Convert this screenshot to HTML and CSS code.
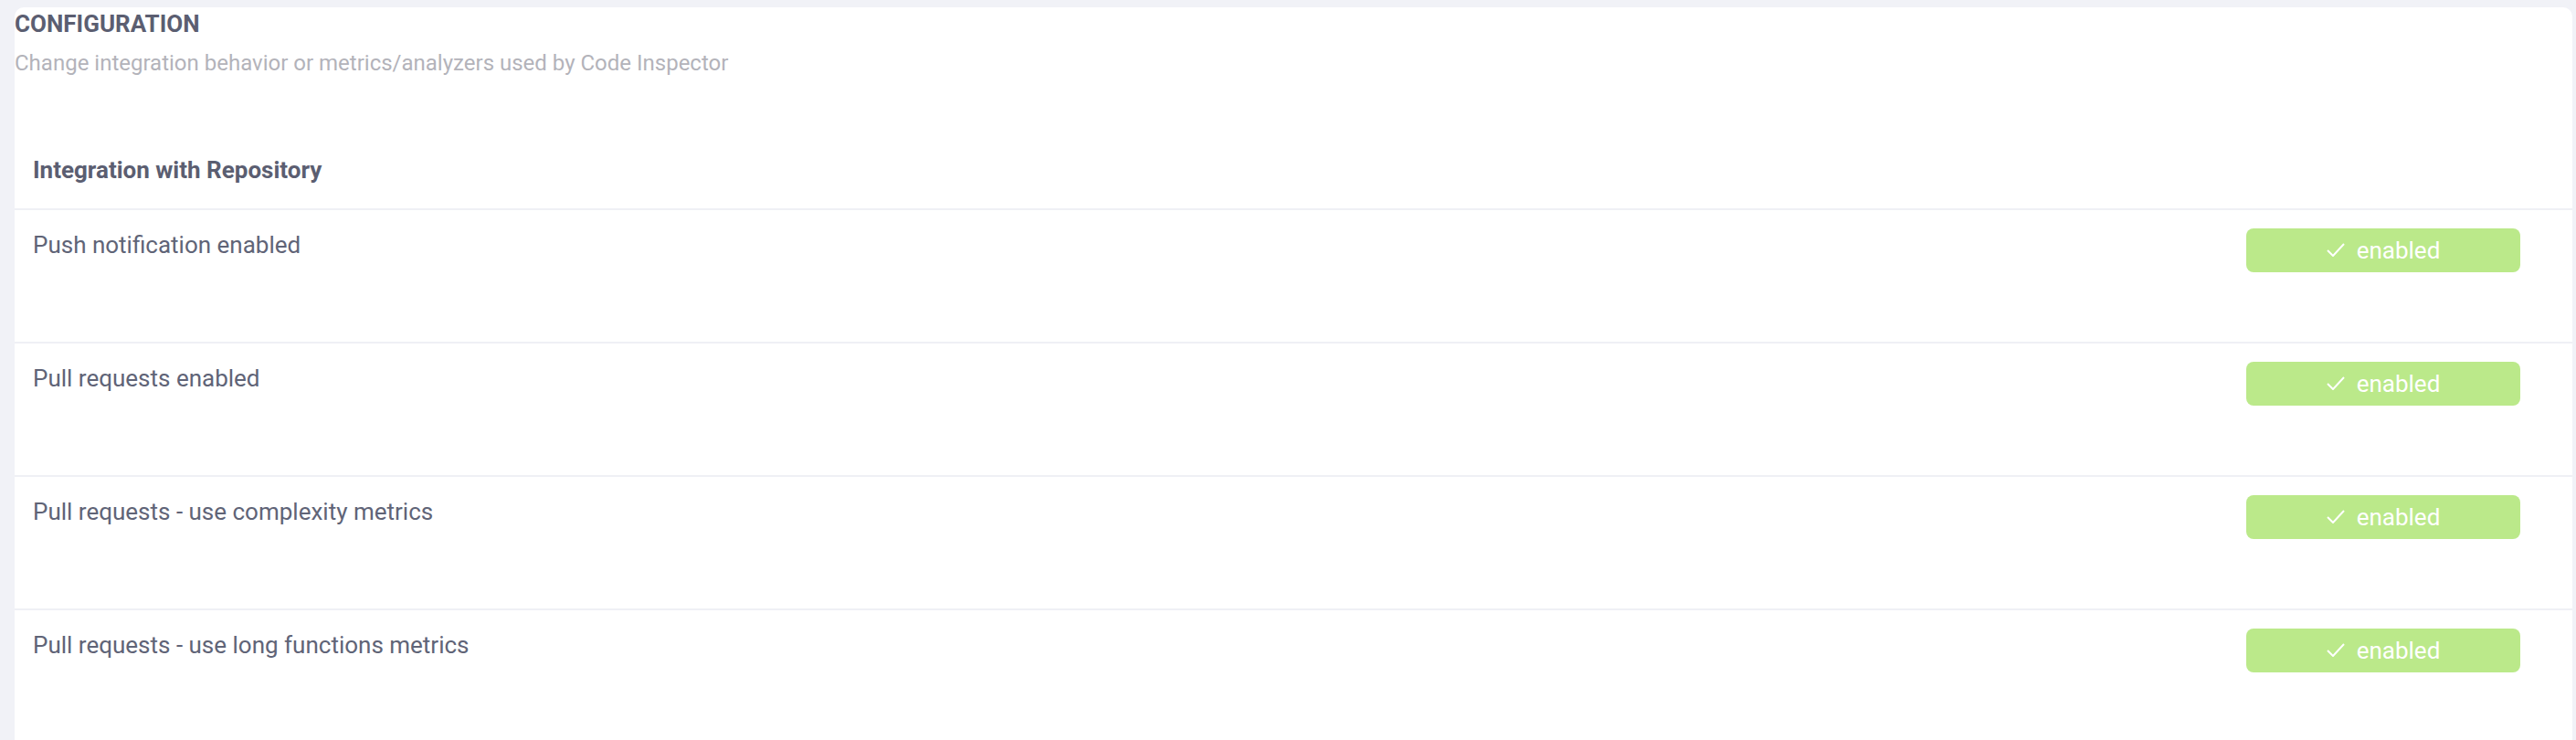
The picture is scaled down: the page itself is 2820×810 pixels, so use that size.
FILE: index.html
```html
<!DOCTYPE html>
<html lang="en">
<head>
<meta charset="utf-8">
<title>Configuration</title>
<link rel="stylesheet" href="styles.css">
</head>
<body>
<div class="page">
  <section class="card">
    <header class="card-header">
      <h1 class="title">CONFIGURATION</h1>
      <p class="subtitle">Change integration behavior or metrics/analyzers used by Code Inspector</p>
    </header>
    <h2 class="section-title">Integration with Repository</h2>
    <div class="rows">
      <div class="row">
        <span class="row-label">Push notification enabled</span>
        <span class="badge"><svg class="check" width="20" height="15" viewBox="0 0 20 15"><polyline points="1,8 7,14 19,1" fill="none" stroke="#fff" stroke-width="2"/></svg><span class="badge-text">enabled</span></span>
      </div>
      <div class="row">
        <span class="row-label">Pull requests enabled</span>
        <span class="badge"><svg class="check" width="20" height="15" viewBox="0 0 20 15"><polyline points="1,8 7,14 19,1" fill="none" stroke="#fff" stroke-width="2"/></svg><span class="badge-text">enabled</span></span>
      </div>
      <div class="row">
        <span class="row-label">Pull requests - use complexity metrics</span>
        <span class="badge"><svg class="check" width="20" height="15" viewBox="0 0 20 15"><polyline points="1,8 7,14 19,1" fill="none" stroke="#fff" stroke-width="2"/></svg><span class="badge-text">enabled</span></span>
      </div>
      <div class="row">
        <span class="row-label">Pull requests - use long functions metrics</span>
        <span class="badge"><svg class="check" width="20" height="15" viewBox="0 0 20 15"><polyline points="1,8 7,14 19,1" fill="none" stroke="#fff" stroke-width="2"/></svg><span class="badge-text">enabled</span></span>
      </div>
    </div>
  </section>
</div>
</body>
</html>
```
FILE: styles.css
```css
html, body {
  margin: 0;
  padding: 0;
  background: #f1f2f7;
  font-family: Roboto, "Liberation Sans", Arial, sans-serif;
}

.page {
  padding: 8px 4px 0 16px;
  height: 810px;
  box-sizing: border-box;
  overflow: hidden;
}

.card {
  background: #ffffff;
  border-radius: 10px 10px 0 0;
  min-height: 900px;
}

.card-header {
  display: flex;
  flex-direction: column;
}

.title {
  margin: 0;
  font-size: 26px;
  line-height: 36px;
  font-weight: 700;
  color: #5b5e71;
}

.subtitle {
  margin: 7px 0 0;
  font-size: 24px;
  line-height: 36px;
  font-weight: 400;
  color: #b3b3ba;
}

.section-title {
  margin: 81px 0 0;
  padding: 0 20px 24px;
  font-size: 26px;
  line-height: 36px;
  font-weight: 700;
  color: #5b5e71;
}

.rows {
  display: flex;
  flex-direction: column;
}

.row {
  display: flex;
  justify-content: space-between;
  align-items: flex-start;
  height: 146px;
  box-sizing: border-box;
  border-top: 2px solid #eff0f5;
  padding: 20px 57px 0 20px;
}

.row-label {
  font-size: 26px;
  line-height: 36px;
  color: #606477;
}

.badge {
  display: flex;
  align-items: center;
  justify-content: center;
  gap: 13px;
  width: 300px;
  height: 48px;
  border-radius: 8px;
  background: #bbe98a;
  color: #ffffff;
}

.check {
  display: block;
  margin-top: -2px;
}

.badge-text {
  font-size: 26px;
  line-height: 36px;
}
```
